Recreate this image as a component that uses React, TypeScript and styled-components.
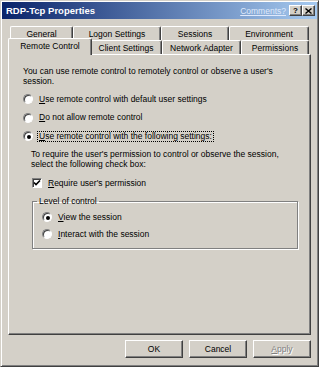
import React from "react";
import styled, { createGlobalStyle } from "styled-components";

const GlobalStyle = createGlobalStyle`
  html, body {
    margin: 0;
    padding: 0;
    background: #ffffff;
  }
  body {
    font-family: "Liberation Sans", Arial, sans-serif;
    font-size: 8.5px;
    color: #000000;
  }
`;

const backTabs = [
  { label: "General", w: 63 },
  { label: "Logon Settings", w: 88 },
  { label: "Sessions", w: 68 },
  { label: "Environment", w: 80 },
];

const frontTabs = [
  { label: "Remote Control", w: 80, active: true },
  { label: "Client Settings", w: 72 },
  { label: "Network Adapter", w: 79 },
  { label: "Permissions", w: 68 },
];

const App: React.FC = () => {
  return (
    <>
      <GlobalStyle />
      <Window>
        <TitleBar>
          <TitleText>RDP-Tcp Properties</TitleText>
          <CommentsLink>Comments?</CommentsLink>
          <CaptionButton>?</CaptionButton>
          <CaptionButton>
            <svg width="7" height="6" viewBox="0 0 7 6">
              <path d="M0.5 0.5 L6.5 5.5 M6.5 0.5 L0.5 5.5" stroke="#000" strokeWidth="1.4" />
            </svg>
          </CaptionButton>
        </TitleBar>

        <Body>
          <TabRow>
            {backTabs.map((t) => (
              <Tab key={t.label} $w={t.w}>
                {t.label}
              </Tab>
            ))}
          </TabRow>
          <TabRow>
            {frontTabs.map((t) => (
              <Tab key={t.label} $w={t.w} $active={t.active}>
                {t.label}
              </Tab>
            ))}
          </TabRow>

          <Panel>
            <Paragraph>
              You can use remote control to remotely control or observe a user's
              <br />
              session.
            </Paragraph>

            <RadioGroup>
              <OptionRow>
                <Radio />
                <Label>
                  <u>U</u>se remote control with default user settings
                </Label>
              </OptionRow>
              <OptionRow>
                <Radio />
                <Label>
                  <u>D</u>o not allow remote control
                </Label>
              </OptionRow>
              <OptionRow>
                <Radio $checked />
                <Label $focused>
                  <u>U</u>se remote control with the following settings:
                </Label>
              </OptionRow>
            </RadioGroup>

            <Paragraph $indent={8} $top={7}>
              To require the user's permission to control or observe the session,
              <br />
              select the following check box:
            </Paragraph>

            <CheckRow>
              <CheckBox>
                <svg width="8" height="8" viewBox="0 0 8 8">
                  <path d="M1 3.5 L3 5.5 L7 1.5" fill="none" stroke="#000" strokeWidth="1.6" />
                </svg>
              </CheckBox>
              <Label>
                <u>R</u>equire user's permission
              </Label>
            </CheckRow>

            <GroupBox>
              <Legend>Level of control</Legend>
              <GroupInner>
                <OptionRow>
                  <Radio $checked />
                  <Label>
                    <u>V</u>iew the session
                  </Label>
                </OptionRow>
                <OptionRow>
                  <Radio />
                  <Label>
                    <u>I</u>nteract with the session
                  </Label>
                </OptionRow>
              </GroupInner>
            </GroupBox>
          </Panel>

          <ButtonRow>
            <PushButton>OK</PushButton>
            <PushButton>Cancel</PushButton>
            <PushButton disabled>
              <u>A</u>pply
            </PushButton>
          </ButtonRow>
        </Body>
      </Window>
    </>
  );
};

export default App;

const Window = styled.div`
  box-sizing: border-box;
  width: 319px;
  height: 367px;
  background: #d4d0c8;
  border: 1px solid;
  border-color: #d4d0c8 #404040 #404040 #d4d0c8;
  box-shadow: inset 1px 1px #ffffff, inset -1px -1px #808080;
  padding: 1px;
  display: flex;
  flex-direction: column;
`;

const TitleBar = styled.div`
  height: 17px;
  flex: 0 0 17px;
  display: flex;
  align-items: center;
  padding: 0 2px 0 4px;
  background: linear-gradient(to right, #0a246a, #a6caf0);
`;

const TitleText = styled.div`
  flex: 1;
  color: #ffffff;
  font-weight: bold;
  font-size: 9.5px;
`;

const CommentsLink = styled.span`
  color: #dfe9fb;
  text-decoration: underline;
  font-size: 8.5px;
  margin-right: 3px;
`;

const CaptionButton = styled.div`
  box-sizing: border-box;
  width: 13px;
  height: 11px;
  display: flex;
  align-items: center;
  justify-content: center;
  background: #d4d0c8;
  border: 1px solid;
  border-color: #ffffff #404040 #404040 #ffffff;
  box-shadow: inset -1px -1px #808080;
  font-weight: bold;
  font-size: 8px;
  line-height: 1;
  color: #000000;
`;

const Body = styled.div`
  flex: 1;
  display: flex;
  flex-direction: column;
  padding: 7px 6px 7px 6px;
  min-height: 0;
`;

const TabRow = styled.div`
  display: flex;
  height: 14px;
  padding-left: 2px;
`;

const Tab = styled.div<{ $w: number; $active?: boolean }>`
  box-sizing: border-box;
  width: ${(p) => p.$w}px;
  flex: 0 0 auto;
  display: flex;
  align-items: center;
  justify-content: center;
  white-space: nowrap;
  background: #d4d0c8;
  border-top: 1px solid #ffffff;
  border-left: 1px solid #ffffff;
  border-right: 1px solid #404040;
  border-radius: 2px 2px 0 0;
  box-shadow: inset -1px 0 #808080;
  ${(p) =>
    p.$active &&
    `
    width: ${p.$w + 4}px;
    margin: -2px -2px -1px -2px;
    height: 17px;
    z-index: 1;
    padding-bottom: 2px;
  `}
`;

const Panel = styled.div`
  box-sizing: border-box;
  flex: 1;
  border: 1px solid;
  border-color: #ffffff #404040 #404040 #ffffff;
  box-shadow: inset -1px -1px #808080;
  padding: 11px 14px 0 14px;
  display: flex;
  flex-direction: column;
  align-items: flex-start;
`;

const Paragraph = styled.div<{ $indent?: number; $top?: number }>`
  line-height: 10px;
  margin-left: ${(p) => p.$indent ?? 0}px;
  margin-top: ${(p) => p.$top ?? 0}px;
  white-space: nowrap;
`;

const RadioGroup = styled.div`
  display: flex;
  flex-direction: column;
  gap: 6.5px;
  margin-top: 7px;
`;

const OptionRow = styled.div`
  display: flex;
  align-items: center;
  height: 12px;
  gap: 4px;
`;

const Radio = styled.span<{ $checked?: boolean }>`
  box-sizing: border-box;
  width: 10px;
  height: 10px;
  border-radius: 50%;
  background: #ffffff;
  border: 1px solid;
  border-color: #808080 #ffffff #ffffff #808080;
  box-shadow: inset 1px 1px #404040;
  display: flex;
  align-items: center;
  justify-content: center;
  &::after {
    content: "";
    width: 4px;
    height: 4px;
    border-radius: 50%;
    background: ${(p) => (p.$checked ? "#000000" : "transparent")};
    margin: 1px 0 0 1px;
  }
`;

const Label = styled.span<{ $focused?: boolean }>`
  white-space: nowrap;
  padding: 0 1px;
  border: 1px dotted ${(p) => (p.$focused ? "#000000" : "transparent")};
  line-height: 9px;
`;

const CheckRow = styled.div`
  display: flex;
  align-items: center;
  height: 12px;
  gap: 4px;
  margin: 8px 0 0 9px;
`;

const CheckBox = styled.span`
  box-sizing: border-box;
  width: 10px;
  height: 10px;
  background: #ffffff;
  border: 1px solid;
  border-color: #808080 #ffffff #ffffff #808080;
  box-shadow: inset 1px 1px #404040;
  display: flex;
  align-items: center;
  justify-content: center;
`;

const GroupBox = styled.fieldset`
  box-sizing: border-box;
  width: 266px;
  margin: 7px 0 0 9px;
  padding: 0;
  border: 1px solid #808080;
  box-shadow: inset 1px 1px #ffffff, 1px 1px #ffffff;
  min-width: 0;
`;

const Legend = styled.legend`
  margin-left: 4px;
  padding: 0 2px;
  line-height: 10px;
`;

const GroupInner = styled.div`
  display: flex;
  flex-direction: column;
  gap: 5px;
  padding: 5px 0 8px 9px;
`;

const ButtonRow = styled.div`
  display: flex;
  justify-content: flex-end;
  gap: 6px;
  margin-top: 5px;
  padding-right: 0;
`;

const PushButton = styled.button`
  box-sizing: border-box;
  width: 58px;
  height: 18px;
  padding: 0;
  font-family: "Liberation Sans", Arial, sans-serif;
  font-size: 8.5px;
  color: #000000;
  background: #d4d0c8;
  border: 1px solid;
  border-color: #ffffff #404040 #404040 #ffffff;
  box-shadow: inset -1px -1px #808080;
  border-radius: 0;
  &:disabled {
    color: #808080;
    text-shadow: 1px 1px #ffffff;
  }
`;
